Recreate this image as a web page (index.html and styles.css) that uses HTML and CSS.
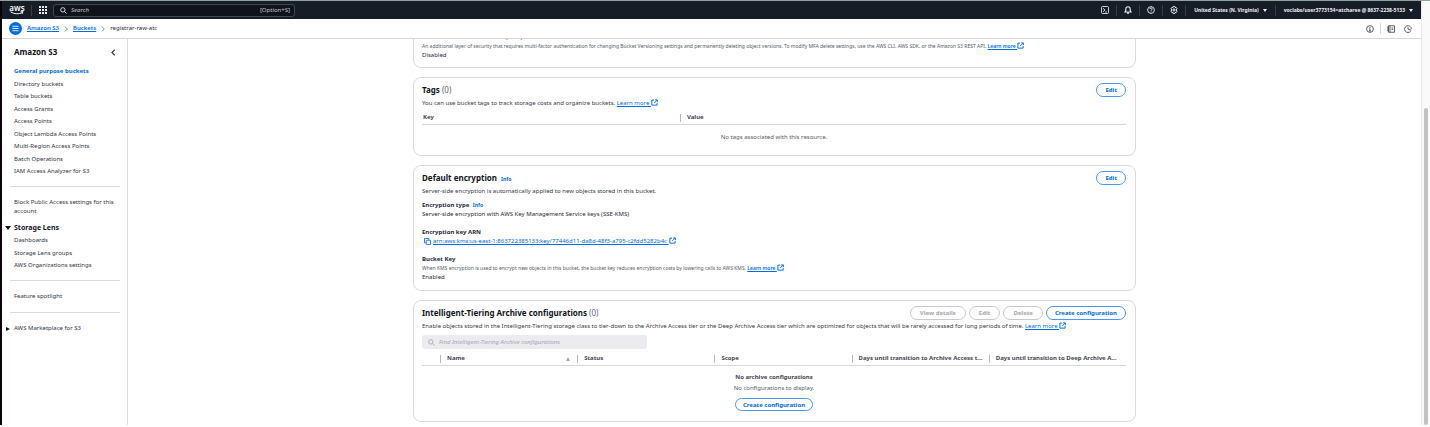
FILE: index.html
```html
<!DOCTYPE html>
<html lang="en">
<head>
<meta charset="utf-8">
<title>registrar-raw-atc - S3 bucket</title>
<link rel="stylesheet" href="styles.css">
</head>
<body>
<svg class="defs" width="0" height="0" aria-hidden="true">
  <symbol id="ext" viewBox="0 0 16 16"><path d="M7 2.5H2v11.500h12V9M9.500 2H14.500V7M14 2.500L7.500 9" fill="none" stroke="currentColor" stroke-width="2.200"/></symbol>
  <symbol id="chev" viewBox="0 0 16 16"><path d="M5 1.500L11.500 8 5 14.500" fill="none" stroke="currentColor" stroke-width="2"/></symbol>
  <symbol id="glass" viewBox="0 0 16 16"><circle cx="6.500" cy="6.500" r="5" fill="none" stroke="currentColor" stroke-width="2"/><path d="M10 10l5 5" stroke="currentColor" stroke-width="2"/></symbol>
</svg>
<div class="frame">
  <div class="window">
    <header class="topnav">
      <a class="logo" href="#" aria-label="AWS home">
        <span>aws</span>
        <svg viewBox="0 0 28 7" aria-hidden="true"><path d="M1 1c8 5 17 5 24 1.500M21 1.200l5-.4-1.500 4.200" fill="none" stroke="currentColor" stroke-width="2"/></svg>
      </a>
      <button class="navbtn apps" aria-label="Services">
        <svg viewBox="0 0 16 16" fill="currentColor"><path d="M0 0h4v4H0zM6 0h4v4H6zM12 0h4v4h-4zM0 6h4v4H0zM6 6h4v4H6zM12 6h4v4h-4zM0 12h4v4H0zM6 12h4v4H6zM12 12h4v4h-4z"/></svg>
      </button>
      <label class="search">
        <svg aria-hidden="true"><use href="#glass"/></svg>
        <input type="text" placeholder="Search" aria-label="Search">
        <span>[Option+S]</span>
      </label>
      <div class="tools">
        <button class="navbtn" aria-label="CloudShell"><svg viewBox="0 0 16 16" fill="none" stroke="currentColor" stroke-width="1.700"><rect x="1" y="1" width="14" height="14" rx="2"/><path d="M4 4.500L8 8l-4 3.500M8.500 12H12"/></svg></button>
        <button class="navbtn" aria-label="Notifications"><svg viewBox="0 0 16 16" fill="none" stroke="currentColor" stroke-width="2.200"><path d="M8 1.500c-3 0-4.300 2-4.300 4.500v2.500L2 12h12l-1.700-3.500V6C12.300 3.500 11 1.500 8 1.500zM6 14.500h4"/></svg></button>
        <button class="navbtn" aria-label="Help"><svg viewBox="0 0 16 16" fill="none" stroke="currentColor" stroke-width="1.800"><circle cx="8" cy="8" r="6.800"/><path d="M5.500 6c0-3 5-2.800 5 0 0 1.800-2.500 1.600-2.500 3.600M8 11v1.600"/></svg></button>
        <button class="navbtn" aria-label="Settings"><svg viewBox="0 0 16 16" fill="none" stroke="currentColor" stroke-width="1.900"><path d="M6.500 1h3l.6 2 2-.4 1.800 2.600L12.700 8l1.200 2.800-1.800 2.600-2-.4-.6 2h-3l-.6-2-2 .4-1.800-2.600L3.300 8 2.100 5.200l1.800-2.600 2 .4z"/><circle cx="8" cy="8" r="2.200"/></svg></button>
        <button class="navbtn text">United States (N. Virginia)<i class="caret"></i></button>
        <button class="navbtn text">voclabs/user3773154=atcharee @ 8637-2238-5133<i class="caret"></i></button>
      </div>
    </header>

    <div class="crumbbar">
      <button class="menu" aria-label="Toggle navigation"><svg viewBox="0 0 16 16" stroke="currentColor" stroke-width="2" aria-hidden="true"><path d="M1 3h14M1 8h14M1 13h14"/></svg></button>
      <nav class="crumbs" aria-label="Breadcrumbs">
        <a href="#">Amazon S3</a>
        <svg aria-hidden="true"><use href="#chev"/></svg>
        <a href="#">Buckets</a>
        <svg aria-hidden="true"><use href="#chev"/></svg>
        <span>registrar-raw-atc</span>
      </nav>
      <div class="pagetools">
        <button aria-label="Info"><svg viewBox="0 0 16 16" fill="none" stroke="currentColor" stroke-width="1.700"><circle cx="8" cy="8" r="6.800"/><path d="M8 4v1.800M6.500 7.500H8V12M6 12h4"/></svg></button>
        <button class="split" aria-label="Tutorials"><svg viewBox="0 0 16 16" fill="none" stroke="currentColor" stroke-width="1.700"><path d="M3 1.500h12v13H3zM6 1.500v13M0 4.500h4M0 8h4M0 11.500h4M9 6h3.500M9 9h3.500"/></svg></button>
        <button class="last" aria-label="Recent"><svg viewBox="0 0 16 16" fill="none" stroke="currentColor" stroke-width="1.700"><path d="M13.500 12.200A6.800 6.800 0 1 1 14.800 8M8 4.500V8l6.500 2.500"/></svg></button>
      </div>
    </div>

    <div class="body">
      <aside class="side">
        <div class="sidehead">
          <h2>Amazon S3</h2>
          <button aria-label="Close navigation"><svg viewBox="0 0 16 16"><path d="M11 1.500L4.500 8l6.500 6.500" fill="none" stroke="currentColor" stroke-width="2.500"/></svg></button>
        </div>
        <ul class="links main-links">
          <li><a class="current" href="#">General purpose buckets</a></li>
          <li><a href="#">Directory buckets</a></li>
          <li><a href="#">Table buckets</a></li>
          <li><a href="#">Access Grants</a></li>
          <li><a href="#">Access Points</a></li>
          <li><a href="#">Object Lambda Access Points</a></li>
          <li><a href="#">Multi-Region Access Points</a></li>
          <li><a href="#">Batch Operations</a></li>
          <li><a href="#">IAM Access Analyzer for S3</a></li>
        </ul>
        <hr>
        <a class="block" href="#">Block Public Access settings for this account</a>
        <button class="section open">Storage Lens</button>
        <ul class="links lens">
          <li><a href="#">Dashboards</a></li>
          <li><a href="#">Storage Lens groups</a></li>
          <li><a href="#">AWS Organizations settings</a></li>
        </ul>
        <hr>
        <a class="block" href="#">Feature spotlight</a>
        <hr>
        <button class="section">AWS Marketplace for S3</button>
      </aside>

      <main class="content">
        <div class="stack">
          <section class="card">
            <h4>Multi-factor authentication (MFA) delete</h4>
            <p class="hint">An additional layer of security that requires multi-factor authentication for changing Bucket Versioning settings and permanently deleting object versions. To modify MFA delete settings, use the AWS CLI, AWS SDK, or the Amazon S3 REST API. <a href="#">Learn more <svg class="ext"><use href="#ext"/></svg></a></p>
            <p class="value">Disabled</p>
          </section>

          <section class="card">
            <div class="head"><h3>Tags <span>(0)</span></h3><button class="btn">Edit</button></div>
            <p class="desc">You can use bucket tags to track storage costs and organize buckets. <a href="#">Learn more <svg class="ext"><use href="#ext"/></svg></a></p>
            <table class="tags">
              <thead><tr><th class="key">Key</th><th>Value</th></tr></thead>
              <tbody><tr><td colspan="2">No tags associated with this resource.</td></tr></tbody>
            </table>
          </section>

          <section class="card">
            <div class="head"><h3>Default encryption <a class="info" href="#">Info</a></h3><button class="btn">Edit</button></div>
            <p class="desc">Server-side encryption is automatically applied to new objects stored in this bucket.</p>
            <div class="fields">
              <div>
                <h4>Encryption type <a class="info" href="#">Info</a></h4>
                <p class="value">Server-side encryption with AWS Key Management Service keys (SSE-KMS)</p>
              </div>
              <div>
                <h4>Encryption key ARN</h4>
                <p class="value arn"><button aria-label="Copy"><svg viewBox="0 0 16 16" fill="none" stroke="currentColor" stroke-width="2"><rect x="5" y="5" width="10" height="10" rx="1"/><path d="M4 11H1V1h10v3"/></svg></button><a href="#">arn:aws:kms:us-east-1:863722385133:key/77446d11-da8d-48f3-a795-c2fdd5282b4c <svg class="ext"><use href="#ext"/></svg></a></p>
              </div>
              <div>
                <h4>Bucket Key</h4>
                <p class="hint">When KMS encryption is used to encrypt new objects in this bucket, the bucket key reduces encryption costs by lowering calls to AWS KMS. <a href="#">Learn more <svg class="ext"><use href="#ext"/></svg></a></p>
                <p class="value">Enabled</p>
              </div>
            </div>
          </section>

          <section class="card">
            <div class="head">
              <h3>Intelligent-Tiering Archive configurations <span>(0)</span></h3>
              <button class="btn" disabled>View details</button>
              <button class="btn" disabled>Edit</button>
              <button class="btn" disabled>Delete</button>
              <button class="btn">Create configuration</button>
            </div>
            <p class="desc">Enable objects stored in the Intelligent-Tiering storage class to tier-down to the Archive Access tier or the Deep Archive Access tier which are optimized for objects that will be rarely accessed for long periods of time. <a href="#">Learn more <svg class="ext"><use href="#ext"/></svg></a></p>
            <label class="find">
              <svg aria-hidden="true"><use href="#glass"/></svg>
              <input type="text" placeholder="Find Intelligent-Tiering Archive configurations" aria-label="Find configurations" disabled>
            </label>
            <table class="tiers">
              <thead><tr><th class="pick"></th><th><div class="sortable">Name<i class="sort"></i></div></th><th>Status</th><th>Scope</th><th>Days until transition to Archive Access t...</th><th>Days until transition to Deep Archive A...</th></tr></thead>
              <tbody><tr><td colspan="6">
                <strong>No archive configurations</strong>
                <p>No configurations to display.</p>
                <button class="btn low">Create configuration</button>
              </td></tr></tbody>
            </table>
          </section>
        </div>
      </main>
    </div>
  </div>
  <div class="scroll"><div class="thumb"></div></div>
</div>
</body>
</html>
```
FILE: styles.css
```css
* { box-sizing: border-box; margin: 0; padding: 0; }
body { font: 6px/9px "Noto Sans", "Open Sans", sans-serif; color: #232b37; background: #fff; }
button, input { font: inherit; color: inherit; background: none; border: 0; }
button { cursor: pointer; }
svg { display: block; flex: none; }
a { color: #006ce0; text-underline-offset: 1px; }
ul { list-style: none; }
.defs { position: absolute; }

.frame { display: flex; height: 100vh; border-top: 1px solid #8da39b; border-bottom: 2px solid #fff; }
.window { flex: 1; min-width: 0; display: flex; flex-direction: column; border-left: 2px solid #0a0208; }
.scroll { width: 9px; display: flex; padding: 107px 2px 0; background: #fafafa; border-left: 1px solid #e8e8e8; }
.thumb { flex: 1; background: #c1c1c1; border-radius: 3px; }

/* Top navigation */
.topnav { display: flex; align-items: center; height: 18px; padding-left: 7px; background: #161d26; color: #f0f1f3; }
.logo { display: flex; flex-direction: column; align-items: center; width: 16px; color: #fff; text-decoration: none; font-weight: 600; font-size: 8px; line-height: 6px; }
.logo svg { width: 14px; height: 4px; }
.apps { margin-left: 6px; }
.navbtn { display: flex; align-items: center; justify-content: center; width: 22px; height: 11px; border-left: 1px solid #363d47; white-space: nowrap; }
.navbtn svg { width: 8px; height: 8px; }
.search { display: flex; align-items: center; width: 242px; height: 13px; padding: 0 4px 0 6px; gap: 4px; border: 1px solid #424650; border-radius: 3px; background: #0f141a; }
.search svg { width: 7px; height: 7px; }
.search input { flex: 1; min-width: 0; height: 9px; outline: 0; }
.search input::placeholder { color: #c6c6cd; font-style: italic; opacity: 1; }
.search span { color: #c6c6cd; }
.tools { display: flex; margin-left: auto; }
.tools .navbtn:first-child { border-left: 0; }
.tools .navbtn { width: 23px; }
.tools .navbtn.text { width: auto; padding: 0 8px; gap: 4px; font-size: 5px; font-weight: 700; }
.caret { border: 2px solid transparent; border-top: 3px solid currentColor; border-bottom: 0; }

/* Breadcrumb bar */
.crumbbar { display: flex; align-items: center; height: 20px; padding: 0 7px; gap: 5px; border-bottom: 1px solid #d5d7db; }
.menu { display: flex; align-items: center; justify-content: center; width: 13px; height: 13px; border-radius: 50%; background: #006ce0; color: #fff; }
.menu svg { width: 7px; height: 7px; }
.crumbs { display: flex; align-items: center; gap: 4px; }
.crumbs a { font-weight: 600; }
.crumbs svg { width: 6px; height: 6px; color: #5f6b7a; }
.pagetools { display: flex; margin-left: auto; color: #424650; }
.pagetools button { display: flex; align-items: center; justify-content: center; width: 20px; height: 11px; }
.pagetools .split { border-left: 1px solid #d5d7db; width: 21px; }
.pagetools .last { width: 13px; }
.pagetools svg { width: 8px; height: 8px; }

.body { flex: 1; min-height: 0; display: flex; }

/* Side navigation */
.side { width: 126px; padding: 8px 7px 0 8px; border-right: 1px solid #d9dbdf; }
.side a { color: #2d3542; text-decoration: none; }
.side .current { color: #006ce0; font-weight: 700; }
.sidehead { display: flex; justify-content: space-between; align-items: center; padding: 0 3px 0 4px; height: 10px; }
.sidehead h2 { font-size: 8px; line-height: 10px; color: #0f141a; }
.sidehead svg { width: 7px; height: 7px; }
.links { display: flex; flex-direction: column; justify-content: space-between; padding-left: 4px; }
.links li { line-height: 8px; }
.main-links { height: 108px; margin-top: 10px; }
.lens { height: 33px; margin-top: 4px; }
.side hr { border: 0; border-top: 1px solid #d9dbdf; margin: 11px 0; }
.side .block { display: block; padding-left: 4px; }
.section { display: flex; align-items: center; margin-left: -4px; height: 9px; gap: 4px; color: #2d3542; }
.section::before { content: ""; border: 2px solid transparent; border-left: 4px solid #0f141a; border-right: 0; }
.section.open { margin-top: 7px; gap: 3px; font-size: 7px; font-weight: 700; color: #0f141a; }
.section.open::before { border: 3px solid transparent; border-top: 4px solid #0f141a; border-bottom: 0; margin-left: -1px; }

/* Content, scrolled so the first card runs under the header */
.content { flex: 1; min-width: 0; overflow: hidden; }
.stack { display: flex; flex-direction: column; gap: 9px; max-width: 723px; margin: -13px auto 0; }
.card { padding: 5px 9px 8px 8px; border: 1px solid #d9dbdf; border-radius: 8px; }
.card:first-child { padding: 6px 8px 7px; }
.head { display: flex; align-items: center; gap: 3px; height: 14px; }
.head h3 { flex: 1; font-size: 8px; line-height: 14px; color: #0f141a; }
.head h3 span { font-weight: 400; color: #656871; }
.card h4 { color: #232b37; }
.card .info { margin-left: 2px; font-size: 5px; font-weight: 700; text-decoration: none; }
.hint { font-size: 5px; color: #545b66; white-space: nowrap; }
.hint a { font-weight: 600; }
.desc { margin-top: 2px; color: #333a45; white-space: nowrap; }
.ext { display: inline-block; width: 7px; height: 7px; vertical-align: -1px; }
.fields { display: flex; flex-direction: column; gap: 9px; margin-top: 5px; }
.arn { display: flex; align-items: center; gap: 2px; padding-left: 2px; height: 9px; }
.arn button { color: #006ce0; }
.arn button svg { width: 7px; height: 7px; }

.btn { height: 14px; padding: 0 8px; border: 1px solid #4a97ee; border-radius: 7px; font-weight: 700; line-height: 12px; color: #006ce0; white-space: nowrap; }
.btn:disabled { padding: 0 9px; border-color: #c6c9cf; color: #a4a8b0; }
.btn.low { height: 13px; margin-top: 5px; padding: 0 7px; }

table { width: 100%; table-layout: fixed; border-collapse: collapse; }
th { position: relative; padding: 0 7px; text-align: left; color: #424650; white-space: nowrap; }
th + th::before { content: ""; position: absolute; left: 0; top: 2px; height: 8px; border-left: 1px solid #b4b8bf; }
thead tr { border-bottom: 1px solid #d5d7db; }
td { text-align: center; color: #545b66; }
.tags { margin-top: 4px; margin-bottom: -8px; }
.tags th { height: 12px; }
.tags .key { width: 258px; padding-left: 1px; }
.tags td { height: 31px; padding-bottom: 4px; }
.tiers { margin-top: 4px; }
.tiers th { height: 12px; }
.tiers .pick { width: 18px; }
.tiers td { padding: 7px 0 2px; }
.tiers strong { display: block; color: #424650; }
.tiers p { margin-top: 2px; }
.sortable { display: flex; justify-content: space-between; align-items: center; }
.sort { border: 2px solid transparent; border-bottom: 4px solid #a4a8b0; border-top: 0; }
.find { display: flex; align-items: center; gap: 4px; width: 32%; height: 14px; margin-top: 4px; padding: 0 6px; border-radius: 3px; background: #ebebf0; color: #a4a8b0; }
.find svg { width: 7px; height: 7px; }
.find input { flex: 1; min-width: 0; height: 9px; }
.find input::placeholder { color: #a4a8b0; font-style: italic; opacity: 1; }
```
